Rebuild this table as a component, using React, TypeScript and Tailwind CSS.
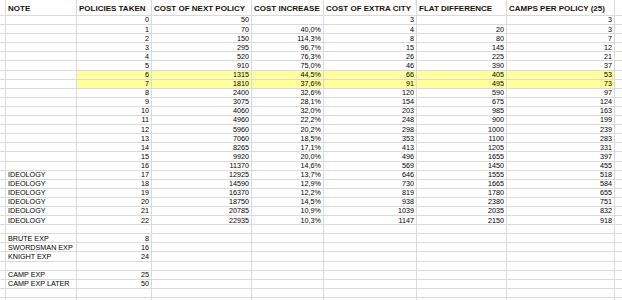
const headers = [
  "NOTE",
  "POLICIES TAKEN",
  "COST OF NEXT POLICY",
  "COST INCREASE",
  "COST OF EXTRA CITY",
  "FLAT DIFFERENCE",
  "CAMPS PER POLICY (25)",
];

// note, taken, next cost, increase, extra city, flat diff, camps
const rows: string[][] = [
  ["", "0", "50", "", "3", "", "3"],
  ["", "1", "70", "40,0%", "4", "20", "3"],
  ["", "2", "150", "114,3%", "8", "80", "7"],
  ["", "3", "295", "96,7%", "15", "145", "12"],
  ["", "4", "520", "76,3%", "26", "225", "21"],
  ["", "5", "910", "75,0%", "46", "390", "37"],
  ["", "6", "1315", "44,5%", "66", "405", "53"],
  ["", "7", "1810", "37,6%", "91", "495", "73"],
  ["", "8", "2400", "32,6%", "120", "590", "97"],
  ["", "9", "3075", "28,1%", "154", "675", "124"],
  ["", "10", "4060", "32,0%", "203", "985", "163"],
  ["", "11", "4960", "22,2%", "248", "900", "199"],
  ["", "12", "5960", "20,2%", "298", "1000", "239"],
  ["", "13", "7060", "18,5%", "353", "1100", "283"],
  ["", "14", "8265", "17,1%", "413", "1205", "331"],
  ["", "15", "9920", "20,0%", "496", "1655", "397"],
  ["", "16", "11370", "14,6%", "569", "1450", "455"],
  ["IDEOLOGY", "17", "12925", "13,7%", "646", "1555", "518"],
  ["IDEOLOGY", "18", "14590", "12,9%", "730", "1665", "584"],
  ["IDEOLOGY", "19", "16370", "12,2%", "819", "1780", "655"],
  ["IDEOLOGY", "20", "18750", "14,5%", "938", "2380", "751"],
  ["IDEOLOGY", "21", "20785", "10,9%", "1039", "2035", "832"],
  ["IDEOLOGY", "22", "22935", "10,3%", "1147", "2150", "918"],
  ["", "", "", "", "", "", ""],
  ["BRUTE EXP", "8", "", "", "", "", ""],
  ["SWORDSMAN EXP", "16", "", "", "", "", ""],
  ["KNIGHT EXP", "24", "", "", "", "", ""],
  ["", "", "", "", "", "", ""],
  ["CAMP EXP", "25", "", "", "", "", ""],
  ["CAMP EXP LATER", "50", "", "", "", "", ""],
  ["", "", "", "", "", "", ""],
  ["", "", "", "", "", "", ""],
];

const highlighted = [6, 7];

export default function App() {
  return (
    <div
      className="h-[300px] w-[622px] overflow-hidden bg-white text-black"
      style={{ fontFamily: '"Liberation Sans", Arial, sans-serif' }}
    >
      <div className="grid grid-cols-[6px_71px_75px_100px_72px_93px_90px_108px_1fr]">
        <div className="h-[16px] border-r border-b border-[#dadada]" />
        {headers.map((h) => (
          <div
            key={h}
            className="flex h-[16px] items-end overflow-visible whitespace-nowrap border-r border-b border-[#dadada] pb-[2px] pl-[2px] text-[8px] font-bold leading-none text-[#1a1208]"
          >
            {h}
          </div>
        ))}
        <div className="h-[16px] border-b border-[#dadada]" />

        {rows.map((row, i) => {
          const hl = highlighted.includes(i);
          return [
            <div key={`s${i}`} className="h-[9.1px] border-r border-b border-[#dadada]" />,
            ...row.map((cell, j) => (
              <div
                key={`${i}-${j}`}
                className={`flex h-[9.1px] items-center whitespace-nowrap border-r border-b border-[#dadada] text-[7.2px] leading-none ${
                  j === 0 ? "justify-start pl-[2px]" : "justify-end pr-[2px]"
                } ${hl && j > 0 ? "bg-[#ffff9c]" : ""}`}
              >
                {cell}
              </div>
            )),
            <div key={`e${i}`} className="h-[9.1px] border-b border-[#dadada]" />,
          ];
        })}
      </div>
    </div>
  );
}
